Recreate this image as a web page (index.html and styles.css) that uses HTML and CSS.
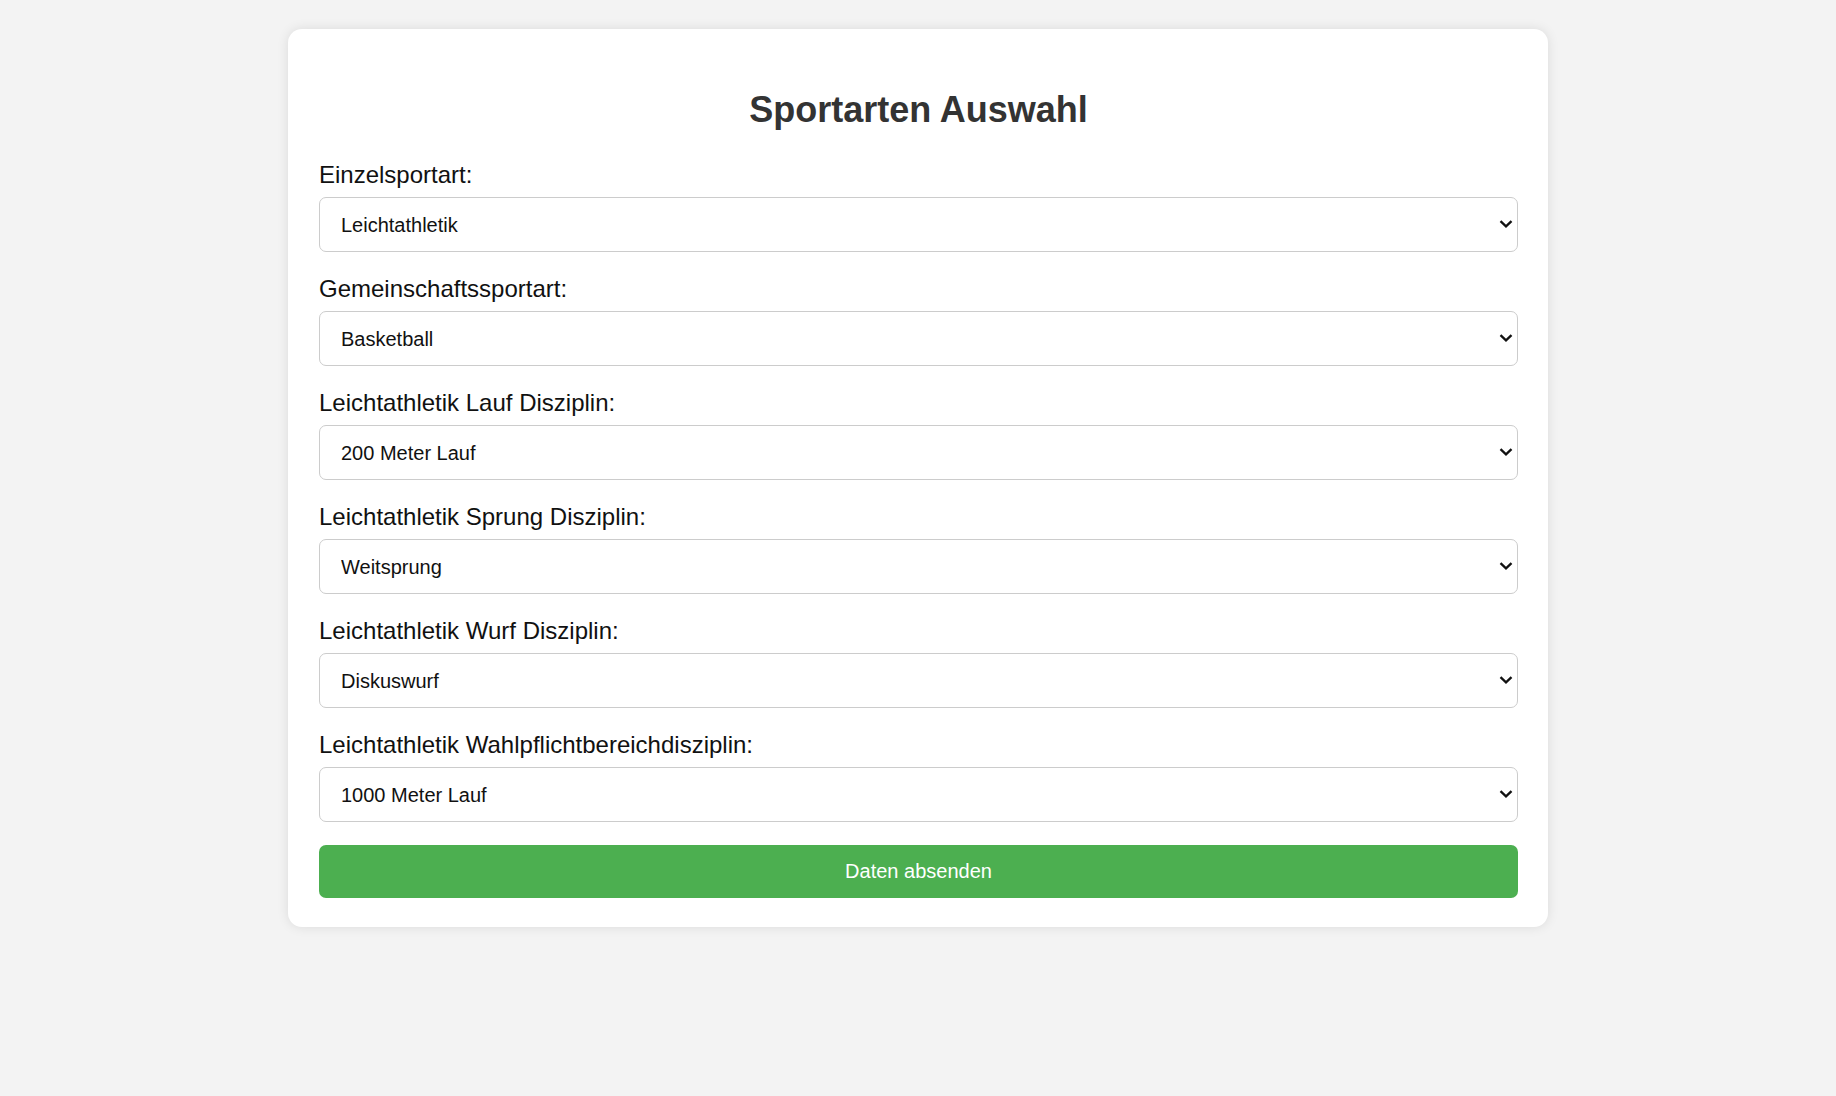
FILE: index.html
```html
<!DOCTYPE html>
<html lang="de">
<head>
    <meta charset="UTF-8">
    <meta name="viewport" content="width=device-width, initial-scale=1.0">
    <title>Sportarten Auswahl</title>
    <link rel="stylesheet" href="styles.css">
</head>
<body>
    <div class="container">
        <h1>Sportarten Auswahl</h1>
        <form>
            <label for="einzel">Einzelsportart:</label>
            <div class="select-wrap">
                <select id="einzel">
                    <option>Leichtathletik</option>
                    <option>Schwimmen</option>
                    <option>Turnen</option>
                </select>
                <svg class="arrow" viewBox="0 0 14 8"><path d="M1.5 1.2 L7 6.4 L12.5 1.2"/></svg>
            </div>

            <label for="gemeinschaft">Gemeinschaftssportart:</label>
            <div class="select-wrap">
                <select id="gemeinschaft">
                    <option>Basketball</option>
                    <option>Fußball</option>
                    <option>Volleyball</option>
                </select>
                <svg class="arrow" viewBox="0 0 14 8"><path d="M1.5 1.2 L7 6.4 L12.5 1.2"/></svg>
            </div>

            <label for="lauf">Leichtathletik Lauf Disziplin:</label>
            <div class="select-wrap">
                <select id="lauf">
                    <option>200 Meter Lauf</option>
                    <option>100 Meter Lauf</option>
                    <option>400 Meter Lauf</option>
                </select>
                <svg class="arrow" viewBox="0 0 14 8"><path d="M1.5 1.2 L7 6.4 L12.5 1.2"/></svg>
            </div>

            <label for="sprung">Leichtathletik Sprung Disziplin:</label>
            <div class="select-wrap">
                <select id="sprung">
                    <option>Weitsprung</option>
                    <option>Hochsprung</option>
                </select>
                <svg class="arrow" viewBox="0 0 14 8"><path d="M1.5 1.2 L7 6.4 L12.5 1.2"/></svg>
            </div>

            <label for="wurf">Leichtathletik Wurf Disziplin:</label>
            <div class="select-wrap">
                <select id="wurf">
                    <option>Diskuswurf</option>
                    <option>Kugelstoßen</option>
                    <option>Speerwurf</option>
                </select>
                <svg class="arrow" viewBox="0 0 14 8"><path d="M1.5 1.2 L7 6.4 L12.5 1.2"/></svg>
            </div>

            <label for="wahl">Leichtathletik Wahlpflichtbereichdisziplin:</label>
            <div class="select-wrap">
                <select id="wahl">
                    <option>1000 Meter Lauf</option>
                    <option>3000 Meter Lauf</option>
                </select>
                <svg class="arrow" viewBox="0 0 14 8"><path d="M1.5 1.2 L7 6.4 L12.5 1.2"/></svg>
            </div>

            <button type="button">Daten absenden</button>
        </form>
    </div>
</body>
</html>
```

FILE: styles.css
```css
body {
    margin: 0;
    padding: 29px 0;
    font-family: "Liberation Sans", Arial, sans-serif;
    background-color: #f3f3f3;
}
.container {
    width: 1199px;
    margin: 0 auto;
    padding: 30px 30px 29px 31px;
    background: #ffffff;
    border-radius: 14px;
    box-shadow: 0 0 12px rgba(0, 0, 0, 0.1);
}
h1 {
    margin: 29px 0 31px;
    font-size: 36px;
    line-height: 43px;
    text-align: center;
    color: #333;
}
label {
    display: block;
    margin-bottom: 9px;
    font-size: 24px;
    line-height: 26px;
    color: #111;
}
.select-wrap {
    position: relative;
    margin-bottom: 24px;
}
select {
    display: block;
    width: 100%;
    height: 55px;
    padding: 0 40px 0 21px;
    box-sizing: border-box;
    font-family: "Liberation Sans", Arial, sans-serif;
    font-size: 20px;
    color: #111;
    background-color: #fff;
    border: 1px solid #ccc;
    border-radius: 7px;
    appearance: none;
    -webkit-appearance: none;
}
.arrow {
    position: absolute;
    right: 5px;
    top: 23px;
    width: 14px;
    height: 8px;
    pointer-events: none;
    fill: none;
    stroke: #111;
    stroke-width: 2.3;
}
button {
    display: block;
    width: 100%;
    height: 53px;
    margin-top: -1px;
    font-family: "Liberation Sans", Arial, sans-serif;
    font-size: 20px;
    color: #fff;
    background-color: #4caf50;
    border: none;
    border-radius: 7px;
    cursor: pointer;
}
button:hover {
    background-color: #45a049;
}
```
